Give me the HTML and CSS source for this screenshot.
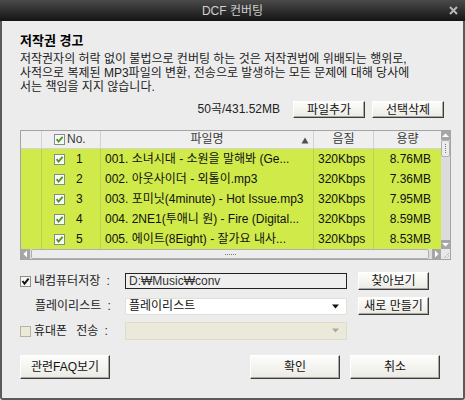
FILE: index.html
```html
<!DOCTYPE html>
<html lang="ko">
<head>
<meta charset="utf-8">
<title>DCF 컨버팅</title>
<link rel="stylesheet" href="styles.css">
</head>
<body>
<div class="window">
  <div class="titlebar">
    <span class="title">DCF 컨버팅</span>
    <svg class="close" width="9" height="9" viewBox="0 0 9 9"><path d="M1 1 L8 8 M8 1 L1 8" stroke="#b8b8b8" stroke-width="2"/></svg>
  </div>
  <div class="frame">
    <h1 class="warn-title">저작권 경고</h1>
    <p class="warn-text">저작권자의 허락 없이 불법으로 컨버팅 하는 것은 저작권법에 위배되는 행위로,<br>사적으로 복제된 MP3파일의 변환, 전송으로 발생하는 모든 문제에 대해 당사에<br>서는 책임을 지지 않습니다.</p>

    <div class="toolbar">
      <span class="count">50곡/431.52MB</span>
      <button class="btn btn-tool">파일추가</button>
      <button class="btn btn-tool">선택삭제</button>
    </div>

    <div class="list">
      <div class="list-main">
        <div class="lrow head">
          <div class="c c-blank"></div>
          <div class="c c-no"><svg class="cb" width="11" height="11" viewBox="0 0 11 11"><rect x="0.5" y="0.5" width="10" height="10" fill="#fafafa" stroke="#8a8a8a"/><path d="M2.6 5.2 L4.6 7.6 L8.6 2.8" fill="none" stroke="#4e9a1c" stroke-width="1.9"/></svg><span class="no-label">No.</span></div>
          <div class="c c-name">파일명<svg class="sort" width="8" height="7" viewBox="0 0 8 7"><polygon points="0.5,6.5 7.5,6.5 4,0.5" fill="#505050"/></svg></div>
          <div class="c c-q">음질</div>
          <div class="c c-size">용량</div>
        </div>
        <div class="lrow">
          <div class="c c-blank"></div>
          <div class="c c-no"><svg class="cb" width="11" height="11" viewBox="0 0 11 11"><rect x="0.5" y="0.5" width="10" height="10" fill="#fafafa" stroke="#8a8a8a"/><path d="M2.6 5.2 L4.6 7.6 L8.6 2.8" fill="none" stroke="#4e9a1c" stroke-width="1.9"/></svg><span class="num">1</span></div>
          <div class="c c-name">001. 소녀시대 - 소원을 말해봐 (Ge...</div>
          <div class="c c-q">320Kbps</div>
          <div class="c c-size">8.76MB</div>
        </div>
        <div class="lrow">
          <div class="c c-blank"></div>
          <div class="c c-no"><svg class="cb" width="11" height="11" viewBox="0 0 11 11"><rect x="0.5" y="0.5" width="10" height="10" fill="#fafafa" stroke="#8a8a8a"/><path d="M2.6 5.2 L4.6 7.6 L8.6 2.8" fill="none" stroke="#4e9a1c" stroke-width="1.9"/></svg><span class="num">2</span></div>
          <div class="c c-name">002. 아웃사이더 - 외톨이.mp3</div>
          <div class="c c-q">320Kbps</div>
          <div class="c c-size">7.36MB</div>
        </div>
        <div class="lrow">
          <div class="c c-blank"></div>
          <div class="c c-no"><svg class="cb" width="11" height="11" viewBox="0 0 11 11"><rect x="0.5" y="0.5" width="10" height="10" fill="#fafafa" stroke="#8a8a8a"/><path d="M2.6 5.2 L4.6 7.6 L8.6 2.8" fill="none" stroke="#4e9a1c" stroke-width="1.9"/></svg><span class="num">3</span></div>
          <div class="c c-name">003. 포미닛(4minute) - Hot Issue.mp3</div>
          <div class="c c-q">320Kbps</div>
          <div class="c c-size">7.95MB</div>
        </div>
        <div class="lrow">
          <div class="c c-blank"></div>
          <div class="c c-no"><svg class="cb" width="11" height="11" viewBox="0 0 11 11"><rect x="0.5" y="0.5" width="10" height="10" fill="#fafafa" stroke="#8a8a8a"/><path d="M2.6 5.2 L4.6 7.6 L8.6 2.8" fill="none" stroke="#4e9a1c" stroke-width="1.9"/></svg><span class="num">4</span></div>
          <div class="c c-name">004. 2NE1(투애니 원) - Fire (Digital...</div>
          <div class="c c-q">320Kbps</div>
          <div class="c c-size">8.59MB</div>
        </div>
        <div class="lrow">
          <div class="c c-blank"></div>
          <div class="c c-no"><svg class="cb" width="11" height="11" viewBox="0 0 11 11"><rect x="0.5" y="0.5" width="10" height="10" fill="#fafafa" stroke="#8a8a8a"/><path d="M2.6 5.2 L4.6 7.6 L8.6 2.8" fill="none" stroke="#4e9a1c" stroke-width="1.9"/></svg><span class="num">5</span></div>
          <div class="c c-name">005. 에이트(8Eight) - 잘가요 내사...</div>
          <div class="c c-q">320Kbps</div>
          <div class="c c-size">8.53MB</div>
        </div>
      </div>

      <div class="vscroll">
        <div class="sbtn"><svg width="9" height="9" viewBox="0 0 9 9"><polygon points="1,6 8,6 4.5,2.5" fill="#fff"/></svg></div>
        <div class="vthumb"><span class="vdots"></span></div>
        <div class="vtrack"></div>
        <div class="sbtn"><svg width="9" height="9" viewBox="0 0 9 9"><polygon points="1,3 8,3 4.5,6.5" fill="#fff"/></svg></div>
      </div>

      <div class="hscroll">
        <div class="sbtn"><svg width="9" height="10" viewBox="0 0 9 10"><polygon points="6,1.5 6,8.5 2.5,5" fill="#fff"/></svg></div>
        <div class="hthumb"><span class="hdots"></span></div>
        <div class="sbtn"><svg width="9" height="10" viewBox="0 0 9 10"><polygon points="3,1.5 3,8.5 6.5,5" fill="#fff"/></svg></div>
      </div>

      <div class="corner"><svg width="9" height="10" viewBox="0 0 9 10"><path d="M8 3 L3 8 M8 5.5 L5.5 8" stroke="#a0a0a0" stroke-width="1" stroke-dasharray="1 1"/></svg></div>
    </div>

    <div class="form">
      <div class="frow">
        <span class="flabel"><svg class="fcb" width="11" height="11" viewBox="0 0 11 11"><rect x="0.5" y="0.5" width="10" height="10" fill="#f6f6f2" stroke="#8e8e8e"/><path d="M2.5 5 L4.5 7.6 L8.6 2.6" fill="none" stroke="#111" stroke-width="1.9"/></svg>내컴퓨터저장 :</span>
        <div class="field input">D:₩Music₩conv</div>
        <button class="btn btn-side">찾아보기</button>
      </div>
      <div class="frow">
        <span class="flabel flabel-indent">플레이리스트 :</span>
        <div class="field select">플레이리스트<svg class="arrow" width="7" height="5" viewBox="0 0 7 5"><polygon points="0,0.5 7,0.5 3.5,4.5" fill="#111"/></svg></div>
        <button class="btn btn-side">새로 만들기</button>
      </div>
      <div class="frow">
        <span class="flabel"><svg class="fcb" width="11" height="11" viewBox="0 0 11 11"><rect x="0.5" y="0.5" width="10" height="10" fill="#ece9d8" stroke="#b8b4a2"/></svg>휴대폰<span class="wide"></span>전송 :</span>
        <div class="field select disabled"><svg class="arrow" width="7" height="5" viewBox="0 0 7 5"><polygon points="0,0.5 7,0.5 3.5,4.5" fill="#a8a8a8"/></svg></div>
      </div>
    </div>

    <div class="actions">
      <button class="btn btn-big">관련FAQ보기</button>
      <span class="spacer"></span>
      <button class="btn btn-big">확인</button>
      <button class="btn btn-big">취소</button>
    </div>
  </div>
</div>
</body>
</html>
```

FILE: styles.css
```css
* { box-sizing: border-box; }

html, body {
  margin: 0;
  padding: 0;
}

body {
  width: 465px;
  height: 400px;
  background: #ececec;
  font-family: "Liberation Sans", "Noto Sans CJK KR", sans-serif;
  font-size: 12px;
  color: #111;
}

.window {
  width: 465px;
  height: 400px;
  display: flex;
  flex-direction: column;
  background: #ececec;
}

.titlebar {
  position: relative;
  flex: none;
  height: 21px;
  padding-top: 2px;
  background: linear-gradient(#4a4a4a, #141414);
  display: flex;
  align-items: center;
  justify-content: center;
  color: #d0d0d0;
  font-size: 12px;
  line-height: 15px;
}

.close {
  position: absolute;
  right: 7px;
  top: 6px;
}

.frame {
  flex: 1;
  border: 2px solid #5a5a5a;
  border-top: 0;
  border-radius: 0 0 3px 3px;
  padding: 0 12px 0 18px;
}

.warn-title {
  margin: 12px 0 0;
  font-size: 13px;
  font-weight: bold;
  line-height: 15px;
  color: #000;
}

.warn-text {
  margin: 4px 0 0;
  line-height: 14px;
  color: #222;
  white-space: nowrap;
}

.toolbar {
  margin: 7px 7px 0 0;
  height: 17px;
  display: flex;
  align-items: center;
  justify-content: flex-end;
  gap: 7px;
}

.count {
  margin-right: 6px;
  color: #222;
  line-height: 15px;
}

.btn {
  font-family: "Liberation Sans", "Noto Sans CJK KR", sans-serif;
  font-size: 12px;
  color: #111;
  padding: 0;
  background: linear-gradient(#fdfdfb, #ebeae4);
  border: 1px solid;
  border-color: #ffffff #3c3c3c #3c3c3c #ffffff;
  box-shadow: inset -1px -1px 0 #a8a8a4;
  line-height: 14px;
  display: flex;
  align-items: center;
  justify-content: center;
}

.btn-tool { width: 72px; height: 17px; }
.btn-side { width: 71px; height: 18px; margin-left: 11px; }
.btn-big { width: 90px; height: 24px; }

/* list */
.list {
  margin-top: 12px;
  width: 431px;
  border: 1px solid #a4a4a4;
  display: grid;
  grid-template-columns: 420px 9px;
  grid-template-rows: 118px 10px;
  background: #e4e4e4;
}

.list-main {
  overflow: hidden;
  background: #d0ea4a;
}

.lrow {
  display: grid;
  grid-template-columns: 20px 59px 213px 60px 68px;
  height: 20px;
  line-height: 20px;
  color: #111;
}

.lrow.head {
  height: 18px;
  line-height: 17px;
  background: #efefef;
  border-bottom: 1px solid #d3d3d3;
  color: #3a3a3a;
}

.c {
  border-left: 1px solid #bccf5a;
  white-space: nowrap;
  overflow: hidden;
}

.head .c { border-left-color: #d2d2d2; }

.c.c-blank { border-left: 0; }

.c-no {
  display: flex;
  align-items: center;
  padding-left: 12px;
}

.cb { flex: none; }

.num { margin-left: 11px; }
.no-label { margin-left: 2px; }

.c-name { padding-left: 4px; }
.c-q { padding-left: 4px; }
.c-size { text-align: right; padding-right: 10px; }

.head .c-name,
.head .c-q,
.head .c-size {
  position: relative;
  padding: 0;
  text-align: center;
}

.sort {
  position: absolute;
  right: 4px;
  top: 6px;
}

.vscroll {
  display: flex;
  flex-direction: column;
  background: #dcdcdc;
}

.sbtn {
  flex: none;
  width: 9px;
  height: 9px;
  background: #a6a6a6;
  display: flex;
  align-items: center;
  justify-content: center;
}

.hscroll .sbtn { height: 10px; }

.vthumb {
  flex: none;
  height: 17px;
  background: #ececec;
  border: 1px solid #b0b0b0;
  border-radius: 2px;
  display: flex;
  justify-content: center;
  align-items: center;
}

.vdots {
  width: 1px;
  height: 9px;
  border-left: 1px dotted #7a7a7a;
}

.vtrack { flex: 1; }

.hscroll {
  display: flex;
  background: #dcdcdc;
}

.hthumb {
  flex: 1;
  margin: 0 3px 0 1px;
  background: #ececec;
  border: 1px solid #b0b0b0;
  border-radius: 2px;
  display: flex;
  justify-content: center;
  align-items: center;
}

.hdots {
  width: 11px;
  height: 1px;
  border-top: 1px dotted #7a7a7a;
}

.corner {
  background: #e8e8e8;
}

/* form */
.form {
  margin-top: 12px;
  display: flex;
  flex-direction: column;
  gap: 7px;
}

.frow {
  height: 18px;
  display: flex;
  align-items: center;
}

.flabel {
  width: 105px;
  display: flex;
  align-items: center;
  line-height: 15px;
  color: #222;
  word-spacing: 3px;
  white-space: nowrap;
}

.fcb { flex: none; margin-right: 3px; }

.flabel-indent { padding-left: 15px; }

.wide { display: inline-block; width: 9px; }

.field {
  width: 222px;
  display: flex;
  align-items: center;
  padding-left: 3px;
  line-height: 15px;
  position: relative;
}

.input {
  height: 16px;
  background: #efefef;
  border: 1px solid #222;
  color: #333;
}

.select {
  height: 17px;
  background: #ffffff;
  border: 1px solid #e2e0d2;
  color: #111;
}

.select.disabled {
  height: 18px;
  background: #ebe9da;
  border-color: #dedcca;
}

.arrow {
  position: absolute;
  right: 7px;
  top: 5px;
}

.actions {
  margin: 15px 11px 0 0;
  display: flex;
  gap: 10px;
}

.spacer { flex: 1; }
```
